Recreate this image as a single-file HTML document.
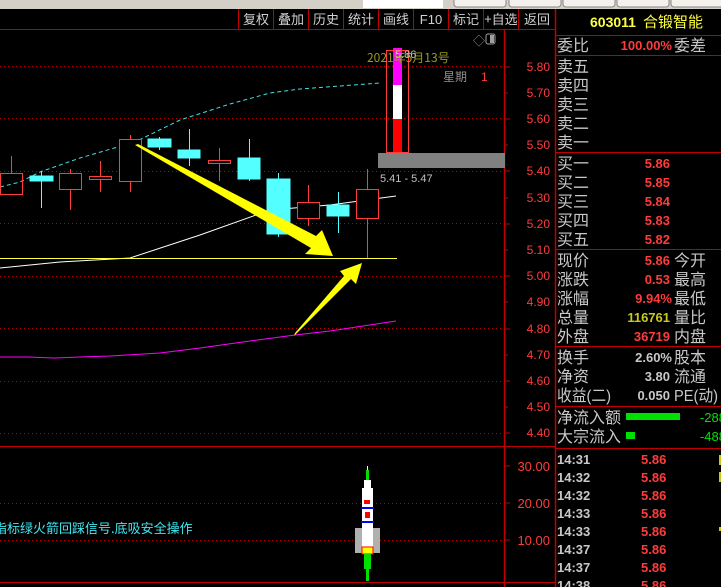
<!DOCTYPE html>
<html><head><meta charset="utf-8"><style>
html,body{margin:0;padding:0;background:#000;width:721px;height:587px;overflow:hidden}
svg{display:block}
text{font-family:"Liberation Sans","Noto Sans CJK SC",sans-serif}
.cn{font-family:"Noto Sans CJK SC","WenQuanYi Zen Hei",sans-serif}
</style></head><body>
<svg width="721" height="587" viewBox="0 0 721 587" xmlns="http://www.w3.org/2000/svg">
<rect width="721" height="587" fill="#000"/>
<rect x="0" y="0" width="721" height="9" fill="#d4d0c8"/>
<rect x="363" y="0" width="80" height="8" fill="#fff"/>
<g fill="#f4f0ec" stroke="#888" stroke-width="1">
<rect x="454" y="-3" width="52" height="10" rx="3"/><rect x="509" y="-3" width="52" height="10" rx="3"/>
<rect x="563" y="-3" width="52" height="10" rx="3"/><rect x="617" y="-3" width="52" height="10" rx="3"/>
<rect x="671" y="-3" width="52" height="10" rx="3"/></g>
<line x1="0" y1="29.5" x2="555" y2="29.5" stroke="#c00000"/>
<g stroke="#c00000"><line x1="238.5" y1="9" x2="238.5" y2="29"/><line x1="273.5" y1="9" x2="273.5" y2="29"/><line x1="308.5" y1="9" x2="308.5" y2="29"/><line x1="343.5" y1="9" x2="343.5" y2="29"/><line x1="378.5" y1="9" x2="378.5" y2="29"/><line x1="413.5" y1="9" x2="413.5" y2="29"/><line x1="448.5" y1="9" x2="448.5" y2="29"/><line x1="483.5" y1="9" x2="483.5" y2="29"/><line x1="518.5" y1="9" x2="518.5" y2="29"/></g>
<g fill="#d0d0d0" font-size="13" text-anchor="middle">
<text x="256" y="24" class="cn">复权</text><text x="291" y="24" class="cn">叠加</text><text x="326" y="24" class="cn">历史</text><text x="361" y="24" class="cn">统计</text><text x="396" y="24" class="cn">画线</text><text x="431" y="24">F10</text><text x="466" y="24" class="cn">标记</text><text x="501" y="24" class="cn">+自选</text><text x="537" y="24" class="cn">返回</text></g>
<line x1="504.5" y1="29" x2="504.5" y2="587" stroke="#c00000" stroke-width="1.5"/>
<line x1="555.5" y1="9" x2="555.5" y2="587" stroke="#c00000" stroke-width="1.5"/>
<line x1="0" y1="446.5" x2="555" y2="446.5" stroke="#c00000"/>
<line x1="0" y1="582.5" x2="555" y2="582.5" stroke="#c00000"/>
<g stroke="#c00000" stroke-dasharray="1 3">
<line x1="0" y1="66.5" x2="504" y2="66.5"/><line x1="0" y1="118.5" x2="504" y2="118.5"/><line x1="0" y1="171.5" x2="504" y2="171.5"/><line x1="0" y1="223.5" x2="504" y2="223.5"/><line x1="0" y1="276.5" x2="504" y2="276.5"/><line x1="0" y1="328.5" x2="504" y2="328.5"/><line x1="0" y1="381.5" x2="504" y2="381.5"/><line x1="0" y1="433.5" x2="504" y2="433.5"/>
<line x1="0" y1="503.5" x2="504" y2="503.5"/><line x1="0" y1="540.5" x2="504" y2="540.5"/></g>
<g stroke="#c00000"><line x1="504" y1="67" x2="510" y2="67"/><line x1="504" y1="93" x2="508" y2="93"/><line x1="504" y1="119" x2="510" y2="119"/><line x1="504" y1="145" x2="508" y2="145"/><line x1="504" y1="171" x2="510" y2="171"/><line x1="504" y1="198" x2="508" y2="198"/><line x1="504" y1="224" x2="510" y2="224"/><line x1="504" y1="250" x2="508" y2="250"/><line x1="504" y1="276" x2="510" y2="276"/><line x1="504" y1="302" x2="508" y2="302"/><line x1="504" y1="329" x2="510" y2="329"/><line x1="504" y1="355" x2="508" y2="355"/><line x1="504" y1="381" x2="510" y2="381"/><line x1="504" y1="407" x2="508" y2="407"/><line x1="504" y1="433" x2="510" y2="433"/>
<line x1="504" y1="466" x2="510" y2="466"/><line x1="504" y1="503" x2="510" y2="503"/><line x1="504" y1="540" x2="510" y2="540"/></g>
<g fill="#ff3c3c" font-size="12" text-anchor="end">
<text x="550" y="71">5.80</text><text x="550" y="97">5.70</text><text x="550" y="123">5.60</text><text x="550" y="149">5.50</text><text x="550" y="175">5.40</text><text x="550" y="202">5.30</text><text x="550" y="228">5.20</text><text x="550" y="254">5.10</text><text x="550" y="280">5.00</text><text x="550" y="306">4.90</text><text x="550" y="333">4.80</text><text x="550" y="359">4.70</text><text x="550" y="385">4.60</text><text x="550" y="411">4.50</text><text x="550" y="437">4.40</text>
<text x="550" y="471" font-size="13">30.00</text><text x="550" y="508" font-size="13">20.00</text><text x="550" y="545" font-size="13">10.00</text></g>
<polyline points="0,187 20,182 40,172 80,158 135,142 180,120 230,104 270,93 300,89 340,86 380,83" fill="none" stroke="#40e0e0" stroke-width="1" stroke-dasharray="4 3"/>
<polyline points="0,268 60,262 130,258 200,235 270,210 330,205 396,196" fill="none" stroke="#fff" stroke-width="1"/>
<polyline points="0,357 27,357 55,358 80,357 110,356 160,353 200,348 250,341 295,335 330,331 396,321" fill="none" stroke="#ff00ff" stroke-width="1"/>
<line x1="0" y1="258.5" x2="397" y2="258.5" stroke="#ffff40"/>
<g stroke="#ff3c3c" fill="none">
<line x1="11.5" y1="156" x2="11.5" y2="173"/><rect x="0.5" y="173.5" width="22" height="21"/>
<line x1="70.5" y1="169" x2="70.5" y2="210"/><rect x="59.5" y="173.5" width="22" height="16" fill="#000"/>
<line x1="100.5" y1="161" x2="100.5" y2="192"/><rect x="89.5" y="176.5" width="22" height="3" fill="#000"/>
<line x1="130.5" y1="135" x2="130.5" y2="192"/><rect x="119.5" y="139.5" width="22" height="42" fill="#000"/>
<line x1="219.5" y1="148" x2="219.5" y2="181"/><rect x="208.5" y="160.5" width="22" height="3" fill="#000"/>
<line x1="308.5" y1="185" x2="308.5" y2="226"/><rect x="297.5" y="202.5" width="22" height="16" fill="#000"/>
<line x1="367.5" y1="169" x2="367.5" y2="258"/><rect x="356.5" y="189.5" width="22" height="29" fill="#000"/>
</g>
<g stroke="#54ffff" fill="#54ffff">
<line x1="41.5" y1="171" x2="41.5" y2="208"/><rect x="30" y="176" width="23" height="5"/>
<line x1="159.5" y1="137" x2="159.5" y2="150"/><rect x="148" y="139" width="23" height="8"/>
<line x1="189.5" y1="129" x2="189.5" y2="166"/><rect x="178" y="150" width="22" height="8"/>
<line x1="249.5" y1="139" x2="249.5" y2="181"/><rect x="238" y="158" width="22" height="21"/>
<line x1="278.5" y1="173" x2="278.5" y2="237"/><rect x="267" y="179" width="23" height="55"/>
<line x1="338.5" y1="192" x2="338.5" y2="233"/><rect x="327" y="205" width="22" height="11"/>
</g>
<polygon points="135,145 138,144 316,236 322,230 333,256 305,254 311,248" fill="#ffff00"/>
<polygon points="294,336 295,333 344,276 340,271 362,263 356,284 351,279" fill="#ffff00"/>
<rect x="378" y="153" width="127" height="15" fill="#808080"/>
<rect x="393" y="48" width="9" height="37" fill="#ff00ff"/>
<rect x="393" y="85" width="9" height="34" fill="#fff"/>
<rect x="393" y="119" width="9" height="34" fill="#ff0000"/>
<rect x="386.5" y="50.5" width="22" height="102" fill="none" stroke="#ff3c3c"/>
<text x="367" y="62" fill="#9a9a20" font-size="12" class="cn">2021年5月13号</text>
<text x="395" y="58" fill="#c0c0c0" font-size="11">5.86</text>
<text x="443" y="81" fill="#909090" font-size="12" class="cn">星期</text>
<text x="481" y="81" fill="#ff3c3c" font-size="12">1</text>
<text x="380" y="182" fill="#c0c0c0" font-size="11">5.41 - 5.47</text>
<text x="473" y="45" fill="#909090" font-size="12">◇</text>
<rect x="486" y="34" width="9" height="10" rx="2" fill="none" stroke="#a0a0a0"/><rect x="490" y="35" width="4" height="8" fill="#a0a0a0"/>
<text x="-6" y="533" fill="#40e8f0" font-size="13" class="cn">指标绿火箭回踩信号.底吸安全操作</text>
<g>
<rect x="367" y="466" width="1" height="5" fill="#fff"/>
<rect x="366" y="470" width="3" height="10" fill="#00e000"/>
<rect x="364" y="480" width="7" height="8" fill="#fff"/>
<rect x="362" y="488" width="11" height="60" fill="#fff"/>
<rect x="355" y="528" width="7" height="25" fill="#b0b0b0"/>
<rect x="373" y="528" width="7" height="25" fill="#b0b0b0"/>
<rect x="364" y="500" width="6" height="4" fill="#ff0000"/>
<rect x="365" y="512" width="5" height="6" fill="#ff0000"/>
<rect x="361" y="507" width="13" height="2" fill="#0000ff"/>
<rect x="361" y="521" width="13" height="2" fill="#0000ff"/>
<rect x="362" y="547" width="11" height="7" fill="#ffff00" stroke="#ff0000"/>
<rect x="364" y="554" width="7" height="15" fill="#00e000"/>
<rect x="366" y="569" width="3" height="12" fill="#00e000"/>
</g>
<text x="590" y="27" fill="#ffff40" font-size="14" font-weight="bold">603011</text>
<text x="643" y="27" fill="#ffff40" font-size="15" class="cn">合锻智能</text>
<g stroke="#c00000"><line x1="555" y1="35.5" x2="721" y2="35.5"/><line x1="555" y1="55.5" x2="721" y2="55.5"/><line x1="555" y1="152.5" x2="721" y2="152.5"/><line x1="555" y1="249.5" x2="721" y2="249.5"/><line x1="555" y1="346.5" x2="721" y2="346.5"/><line x1="555" y1="406.5" x2="721" y2="406.5"/><line x1="555" y1="448.5" x2="721" y2="448.5"/></g>
<g fill="#c8c8c8" font-size="16" class="cn">
<text x="557" y="51">委比</text><text x="674" y="51">委差</text>
<text x="557" y="72">卖五</text><text x="557" y="91">卖四</text><text x="557" y="110">卖三</text><text x="557" y="129">卖二</text><text x="557" y="148">卖一</text>
<text x="557" y="169">买一</text><text x="557" y="188">买二</text><text x="557" y="207">买三</text><text x="557" y="226">买四</text><text x="557" y="245">买五</text>
<text x="557" y="266">现价</text><text x="674" y="266">今开</text><text x="557" y="285">涨跌</text><text x="674" y="285">最高</text><text x="557" y="304">涨幅</text><text x="674" y="304">最低</text><text x="557" y="323">总量</text><text x="674" y="323">量比</text><text x="557" y="342">外盘</text><text x="674" y="342">内盘</text>
<text x="557" y="363">换手</text><text x="674" y="363">股本</text><text x="557" y="382">净资</text><text x="674" y="382">流通</text><text x="557" y="401" textLength="54" lengthAdjust="spacingAndGlyphs">收益(二)</text><text x="674" y="401" textLength="44" lengthAdjust="spacingAndGlyphs">PE(动)</text>
<text x="557" y="423">净流入额</text><text x="557" y="442">大宗流入</text></g>
<g font-size="13" font-weight="bold" text-anchor="end">
<text x="672" y="50" fill="#ff3c3c">100.00%</text>
<text x="670" y="168" fill="#ff3c3c">5.86</text><text x="670" y="187" fill="#ff3c3c">5.85</text><text x="670" y="206" fill="#ff3c3c">5.84</text><text x="670" y="225" fill="#ff3c3c">5.83</text><text x="670" y="244" fill="#ff3c3c">5.82</text>
<text x="670" y="265" fill="#ff3c3c">5.86</text><text x="670" y="284" fill="#ff3c3c">0.53</text><text x="672" y="303" fill="#ff3c3c">9.94%</text><text x="670" y="322" fill="#c8c820">116761</text><text x="670" y="341" fill="#ff3c3c">36719</text>
<text x="672" y="362" fill="#c8c8c8">2.60%</text><text x="670" y="381" fill="#c8c8c8">3.80</text><text x="670" y="400" fill="#c8c8c8">0.050</text>
<text x="726" y="422" fill="#00e000" font-weight="normal">-288</text><text x="726" y="441" fill="#00e000" font-weight="normal">-488</text></g>
<rect x="626" y="413" width="54" height="7" fill="#00e000"/>
<rect x="626" y="432" width="9" height="7" fill="#00e000"/>
<g font-size="13" font-weight="bold">
<g fill="#c8c8c8"><text x="557" y="464">14:31</text><text x="557" y="482">14:32</text><text x="557" y="500">14:32</text><text x="557" y="518">14:33</text><text x="557" y="536">14:33</text><text x="557" y="554">14:37</text><text x="557" y="572">14:37</text><text x="557" y="590">14:38</text></g>
<g fill="#ff3c3c"><text x="641" y="464">5.86</text><text x="641" y="482">5.86</text><text x="641" y="500">5.86</text><text x="641" y="518">5.86</text><text x="641" y="536">5.86</text><text x="641" y="554">5.86</text><text x="641" y="572">5.86</text><text x="641" y="590">5.86</text></g></g>
<g fill="#c8c820"><rect x="719" y="455" width="2" height="10"/><rect x="719" y="472" width="2" height="10"/><rect x="719" y="527" width="2" height="4"/></g>
</svg>
</body></html>
